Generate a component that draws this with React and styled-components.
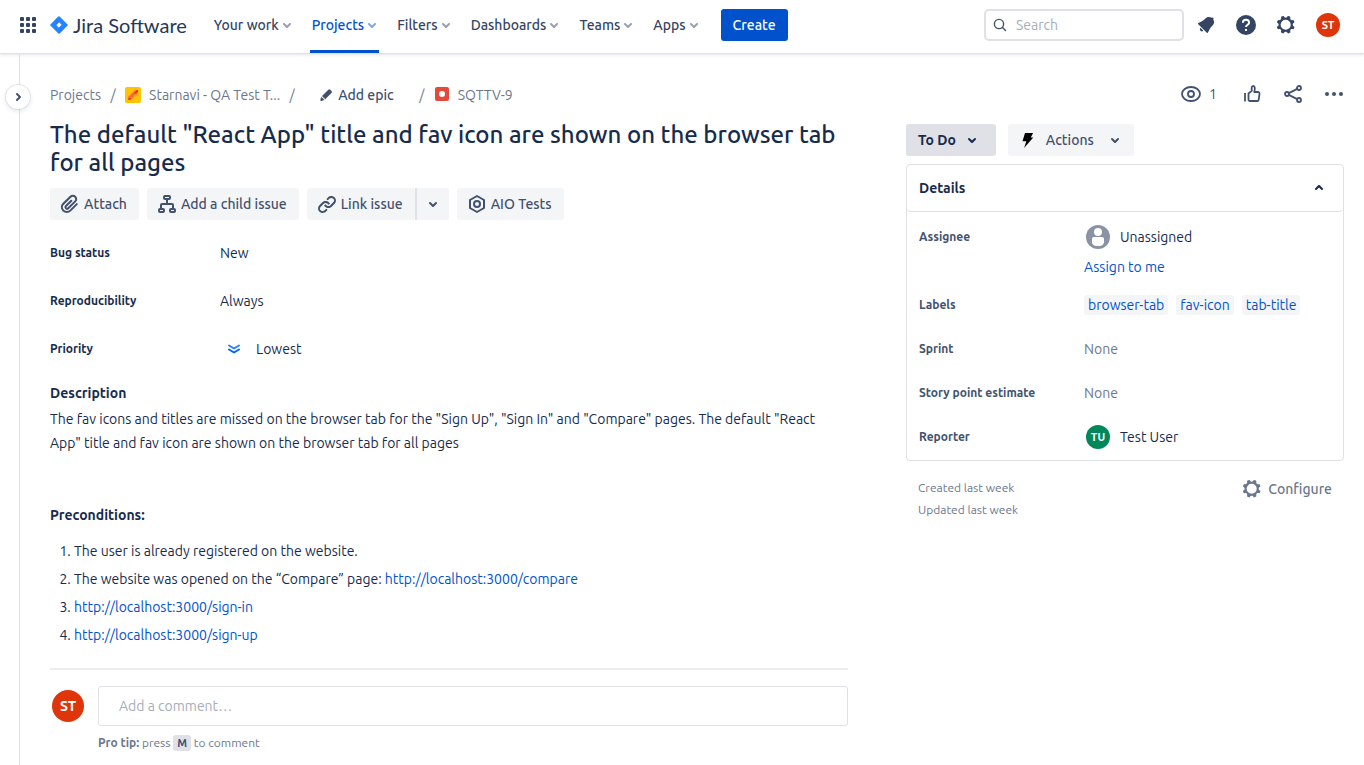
import React from "react";
import styled, { createGlobalStyle, css } from "styled-components";

const c = {
  text: "#172B4D",
  slate: "#42526E",
  nav: "#344563",
  subtle: "#6B778C",
  link: "#0052CC",
  line: "#DFE1E6",
  soft: "#F4F5F7",
  red: "#DE350B",
  green: "#00875A",
};

const GlobalStyle = createGlobalStyle`
  *, *::before, *::after { box-sizing: border-box; }
  body {
    margin: 0;
    background: #fff;
    color: ${c.text};
    font-family: Ubuntu, "Noto Sans", "Open Sans", sans-serif;
    font-size: 14px;
    line-height: 20px;
  }
  button, input { font: inherit; }
  button { line-height: 21px; }
  h1, h2, h3, p, ol, dl, dd, dt { margin: 0; padding: 0; }
  a { color: ${c.link}; text-decoration: none; }
`;

/* ---------- icons ---------- */

const Svg = styled.svg`
  display: block;
  flex: none;
  width: ${(p) => p.$size || 24}px;
  height: ${(p) => p.$size || 24}px;
`;

const Icon = ({ d, size, children }) => (
  <Svg viewBox="0 0 24 24" $size={size} fill="currentColor" aria-hidden="true">
    {d ? <path fillRule="evenodd" d={d} /> : children}
  </Svg>
);

const paths = {
  down: "M8.292 10.293a1.009 1.009 0 000 1.419l2.939 2.965c.218.215.5.322.779.322s.556-.107.769-.322l2.93-2.955a1.01 1.01 0 000-1.419.987.987 0 00-1.406 0l-2.298 2.317-2.307-2.327a.99.99 0 00-1.406 0z",
  up: "M8.292 13.707a1.009 1.009 0 010-1.419l2.939-2.965c.218-.215.5-.322.779-.322s.556.107.769.322l2.93 2.955a1.01 1.01 0 010 1.419.987.987 0 01-1.406 0l-2.298-2.317-2.307 2.327a.99.99 0 01-1.406 0z",
  right: "M10.294 9.698a.988.988 0 010-1.407 1.01 1.01 0 011.419 0l2.965 2.94a1.09 1.09 0 010 1.548l-2.955 2.93a1.01 1.01 0 01-1.42 0 .988.988 0 010-1.407l2.318-2.297-2.327-2.307z",
  gear: "M11.701 16.7a5.002 5.002 0 110-10.003 5.002 5.002 0 010 10.004m8.368-3.117a1.995 1.995 0 01-1.346-1.885c0-.876.563-1.613 1.345-1.885a.48.48 0 00.315-.574 8.947 8.947 0 00-.836-1.993.477.477 0 00-.598-.195 2.04 2.04 0 01-1.29.08 1.988 1.988 0 01-1.404-1.395 2.04 2.04 0 01.076-1.297.478.478 0 00-.196-.597 8.98 8.98 0 00-1.975-.826.479.479 0 00-.574.314 1.995 1.995 0 01-1.885 1.346 1.994 1.994 0 01-1.884-1.345.482.482 0 00-.575-.315c-.708.2-1.379.485-2.004.842a.47.47 0 00-.198.582A2.002 2.002 0 014.445 7.06a.478.478 0 00-.595.196 8.946 8.946 0 00-.833 1.994.48.48 0 00.308.572 1.995 1.995 0 011.323 1.877c0 .867-.552 1.599-1.324 1.877a.479.479 0 00-.308.57 8.99 8.99 0 00.723 1.79.477.477 0 00.624.194c.595-.273 1.343-.264 2.104.238.117.077.225.185.302.3.527.8.512 1.58.198 2.188a.473.473 0 00.168.628 8.946 8.946 0 002.11.897.474.474 0 00.57-.313 1.995 1.995 0 011.886-1.353c.878 0 1.618.567 1.887 1.353a.475.475 0 00.57.313 8.964 8.964 0 002.084-.883.473.473 0 00.167-.631c-.318-.608-.337-1.393.191-2.195.077-.116.185-.225.302-.302.772-.511 1.527-.513 2.125-.23a.477.477 0 00.628-.19 8.925 8.925 0 00.728-1.793.478.478 0 00-.314-.573",
  bell: "M6.485 17.669a2 2 0 002.829 0l-2.829-2.83a2 2 0 000 2.83zm4.897-12.191l-.725.725c-.782.782-2.21 1.813-3.206 2.311l-3.017 1.509c-.495.248-.584.774-.187 1.171l8.556 8.556c.398.396.922.313 1.171-.188l1.51-3.016c.494-.988 1.526-2.42 2.311-3.206l.725-.726a5.048 5.048 0 00.64-6.356 1.01 1.01 0 10-1.354-1.494c-.023.025-.046.049-.066.075a5.043 5.043 0 00-2.788-.84 5.036 5.036 0 00-3.57 1.478z",
  clip: "M11.643 17.965c-1.53 1.495-4.016 1.496-5.542.004a3.773 3.773 0 01.002-5.412l7.147-6.985a2.316 2.316 0 013.24-.001c.891.872.892 2.277.002 3.147l-6.942 6.784a.643.643 0 01-.894-.002.587.587 0 01.002-.842l5.387-5.265a.968.968 0 00.002-1.39 1.024 1.024 0 00-1.432.002l-5.387 5.264a2.522 2.522 0 000 3.619 2.68 2.68 0 003.741-.001l6.942-6.785a4.232 4.232 0 00-.002-6.083 4.412 4.412 0 00-6.168.002l-7.146 6.985a5.69 5.69 0 00-.005 8.203 5.914 5.914 0 008.397-.004l6.512-6.364a.969.969 0 00.002-1.391 1.025 1.025 0 00-1.433.001z",
  link: "M12.856 5.457l-.937.92a1.002 1.002 0 000 1.437 1.047 1.047 0 001.463 0l.984-.966c.967-.95 2.542-1.135 3.602-.288a2.54 2.54 0 01.203 3.81l-2.903 2.852a2.646 2.646 0 01-3.696 0l-1.11-1.09L9 13.57l1.108 1.089c1.822 1.788 4.802 1.788 6.622 0l2.905-2.852a4.558 4.558 0 00-.357-6.82c-1.893-1.517-4.695-1.226-6.422.47M11.144 19.543l.937-.92a1.002 1.002 0 000-1.437 1.047 1.047 0 00-1.462 0l-.985.966c-.967.95-2.542 1.135-3.602.288a2.54 2.54 0 01-.203-3.81l2.903-2.852a2.646 2.646 0 013.696 0l1.11 1.09L15 11.43l-1.108-1.089c-1.822-1.788-4.802-1.788-6.622 0l-2.905 2.852a4.558 4.558 0 00.357 6.82c1.893 1.517 4.695 1.226 6.422-.47",
  bolt: "M9.6 3.500h9.700l-2.800 5.500h3L8.500 21.500l2.700-8.100H6.600z",
};

const AppSwitcher = () => (
  <Icon>
    {[4, 10, 16].map((y) => [4, 10, 16].map((x) => <rect key={`${x}-${y}`} x={x} y={y} width="4" height="4" rx="1" />))}
  </Icon>
);

const JiraMark = () => (
  <Svg viewBox="0 0 18 18" $size={18} aria-hidden="true">
    <defs>
      <linearGradient id="jiraShade" x1="0" x2="1" y1="0" y2="1">
        <stop offset="0" stopColor="#2684FF" />
        <stop offset="0.45" stopColor="#1D74F0" />
        <stop offset="1" stopColor="#2684FF" />
      </linearGradient>
    </defs>
    <path fill="#2684FF" fillRule="evenodd" d="M8.400.5a.8.8 0 011.200 0l8 8a.7.7 0 010 1l-8 8a.8.8 0 01-1.200 0l-8-8a.7.7 0 010-1zM9 6.300L6.300 9 9 11.700 11.700 9z" />
    <path fill="url(#jiraShade)" opacity="0.700" d="M9 6.300C7.300 4.600 7.300 2.300 8.600.6L4.600 4.600 6.300 9zM9 11.700c1.700 1.700 1.700 4 .4 5.700l4-4L11.700 9z" />
  </Svg>
);

const Help = () => (
  <Icon>
    <circle cx="12" cy="12" r="10" />
    <path d="M8.900 9.700a3.100 3 0 116.200 0c0 2.100-3.100 2-3.100 4.400" fill="none" stroke="#fff" strokeWidth="2" />
    <rect x="11" y="16" width="2" height="2" fill="#fff" />
  </Icon>
);

const Magnifier = () => (
  <Icon>
    <g fill="none" stroke="currentColor" strokeWidth="1.400" strokeLinecap="round">
      <circle cx="11" cy="11" r="4.600" />
      <path d="M14.500 14.500l3 3" />
    </g>
  </Icon>
);

const Eye = () => (
  <Icon>
    <g fill="none" stroke="currentColor" strokeWidth="1.800">
      <ellipse cx="12" cy="12" rx="9" ry="7" />
      <circle cx="12" cy="12" r="3" />
    </g>
  </Icon>
);

const Thumb = () => (
  <Icon>
    <g fill="none" stroke="currentColor" strokeWidth="1.800" strokeLinejoin="round">
      <path d="M5 11v8.500" />
      <path d="M8.500 11.500l3.200-2.600V5.500A1.500 1.500 0 0114.600 5c.6 1.600.2 3.300-.4 5H18a1.500 1.500 0 011.500 1.700l-.8 5.900A1.500 1.500 0 0117.200 19H10a1.500 1.500 0 01-1.500-1.500z" />
    </g>
  </Icon>
);

const Share = () => (
  <Icon>
    <g fill="none" stroke="currentColor" strokeWidth="1.800">
      <circle cx="6" cy="12" r="2" />
      <circle cx="18" cy="6" r="2" />
      <circle cx="18" cy="18" r="2" />
      <path d="M7.800 11.100l8.400-4.200M7.800 12.900l8.400 4.200" />
    </g>
  </Icon>
);

const More = () => (
  <Icon>
    <circle cx="5" cy="12" r="2" />
    <circle cx="12" cy="12" r="2" />
    <circle cx="19" cy="12" r="2" />
  </Icon>
);

const Pencil = () => (
  <Svg viewBox="0 0 16 16" $size={16} fill="currentColor" aria-hidden="true">
    <path d="M10.300 2.800a1.400 1.400 0 012 0l1.200 1.200a1.400 1.400 0 010 2l-6.300 6.300-3.200-3.200zM3.300 9.800l3.200 3.200-3.300 1a.8.8 0 01-.9-.9z" />
  </Svg>
);

const Tree = () => (
  <Icon>
    <g fill="none" stroke="currentColor" strokeWidth="2">
      <rect x="9" y="4" width="6" height="3" rx="1" />
      <path d="M12 7v5M6 16v-3a1 1 0 011-1h10a1 1 0 011 1v3" />
      <rect x="4" y="17" width="5" height="3" rx="1" />
      <rect x="15" y="17" width="5" height="3" rx="1" />
    </g>
  </Icon>
);

const Hexagon = () => (
  <Icon>
    <g fill="none" stroke="currentColor" strokeWidth="2" strokeLinejoin="round">
      <path d="M12 4l7 4v8l-7 4-7-4V8z" />
      <circle cx="12" cy="12" r="3" />
    </g>
  </Icon>
);

const Lowest = () => (
  <Svg viewBox="0 0 16 16" $size={16} fill="none" strokeWidth="2" strokeLinecap="round" strokeLinejoin="round" aria-hidden="true">
    <path stroke="#2684FF" d="M3 4.500l5 3 5-3" />
    <path stroke="#0065FF" d="M3 8.500l5 3 5-3" />
  </Svg>
);

const ProjectBadge = () => (
  <Svg viewBox="0 0 16 16" $size={16} aria-hidden="true">
    <rect width="16" height="16" rx="2" fill="#FFC400" />
    <path d="M5 11l6-6" stroke="#FF7452" strokeWidth="4.500" strokeLinecap="round" />
    <path d="M4 12.200l8.300-8.300" stroke="#DE350B" strokeWidth="1.600" strokeLinecap="round" />
    <path d="M5.200 10.500l1.500.3.200-2 1.800.2.200-2 1.800.1" stroke="#FFAB00" strokeWidth="0.800" fill="none" />
  </Svg>
);

const BugBadge = () => (
  <Svg viewBox="0 0 16 16" $size={16} aria-hidden="true">
    <rect x="1" y="0" width="14" height="14" rx="2" fill="#E5493A" />
    <circle cx="8" cy="7" r="3" fill="#fff" />
  </Svg>
);

const Person = () => (
  <Svg viewBox="0 0 24 24" $size={24} aria-hidden="true">
    <circle cx="12" cy="12" r="12" fill="#8993A4" />
    <circle cx="12" cy="7" r="4" fill="#fff" />
    <path d="M6 14a2 2 0 012-2h8a2 2 0 012 2v3.500a5 4 0 01-4 3.500h-4a5 4 0 01-4-3.500z" fill="#fff" />
  </Svg>
);

/* ---------- top bar ---------- */

const TopBar = styled.header`
  display: flex;
  align-items: center;
  height: 54px;
  padding: 0 18px 3px 16px;
  border-bottom: 1px solid ${c.line};
  box-shadow: 0 1px 3px rgba(9, 30, 66, 0.12);
`;

const IconButton = styled.button`
  display: flex;
  align-items: center;
  justify-content: center;
  gap: 6px;
  min-width: ${(p) => p.$w || 32}px;
  height: 32px;
  padding: 0;
  border: 0;
  border-radius: 3px;
  background: none;
  color: ${(p) => p.$color || c.slate};
  cursor: pointer;
`;

const Brand = styled.a`
  display: flex;
  align-items: center;
  gap: 5px;
  margin: 0 25px 0 10px;
  color: #253858;
  font-family: Lato, sans-serif;
  font-size: 20px;
  white-space: nowrap;
`;

const Menu = styled.nav`
  display: flex;
  align-self: stretch;
  gap: 16px;
  margin-bottom: -3px;
`;

const MenuButton = styled.button`
  display: flex;
  align-items: center;
  gap: 3px;
  padding: 0 2px;
  border: 0;
  border-bottom: 3px solid ${(p) => (p.$active ? c.link : "transparent")};
  background: none;
  color: ${(p) => (p.$active ? c.link : c.nav)};
  font-weight: 500;
  white-space: nowrap;
  cursor: pointer;
`;

const Caret = styled.span`
  display: flex;
  justify-content: center;
  width: 10px;
  opacity: 0.5;
`;

const CreateButton = styled.button`
  height: 32px;
  margin-left: 20px;
  padding: 0 12px;
  border: 0;
  border-radius: 3px;
  background: ${c.link};
  color: #fff;
  font-weight: 500;
  cursor: pointer;
`;

const SearchBox = styled.label`
  display: flex;
  align-items: center;
  gap: 4px;
  width: 200px;
  height: 32px;
  margin-left: auto;
  margin-right: 6px;
  padding: 0 4px 0 2px;
  border: 2px solid ${c.line};
  border-radius: 5px;
  color: ${c.slate};
`;

const SearchInput = styled.input`
  flex: 1;
  min-width: 0;
  padding: 0;
  border: 0;
  outline: 0;
  background: none;
  color: ${c.text};
  &::placeholder { color: #A5ADBA; opacity: 1; }
`;

const Tools = styled.div`
  display: flex;
  align-items: center;
  gap: 8px;
`;

const Avatar = styled.span`
  display: flex;
  align-items: center;
  justify-content: center;
  flex: none;
  width: ${(p) => p.$size}px;
  height: ${(p) => p.$size}px;
  border-radius: 50%;
  background: ${(p) => p.$bg};
  color: #fff;
  font-size: ${(p) => (p.$size > 24 ? 14 : 11)}px;
  font-weight: 600;
`;

/* ---------- page frame ---------- */

const Frame = styled.div`
  display: flex;
  flex-direction: column;
  min-height: 100vh;
`;

const Body = styled.div`
  display: flex;
  flex: 1;
`;

const Rail = styled.aside`
  position: relative;
  flex: none;
  width: 20px;
  border-right: 1px solid ${c.line};
`;

const RailToggle = styled.button`
  position: absolute;
  top: 31px;
  left: 6px;
  display: flex;
  align-items: center;
  justify-content: center;
  width: 24px;
  height: 24px;
  padding: 0;
  border: 0;
  border-radius: 50%;
  background: #fff;
  box-shadow: 0 0 0 1px rgba(9, 30, 66, 0.08), 0 2px 4px 1px rgba(9, 30, 66, 0.08);
  color: ${c.slate};
`;

const Page = styled.main`
  display: grid;
  grid-template-columns: minmax(0, 798fr) minmax(0, 438fr);
  column-gap: 58px;
  flex: 1;
  align-items: start;
  padding: 25px 20px 12px 30px;
`;

const Column = styled.div`
  min-width: 0;
`;

/* ---------- left column ---------- */

const Crumbs = styled.nav`
  display: flex;
  align-items: center;
  gap: 8px;
  height: 32px;
  white-space: nowrap;
  color: ${c.subtle};
`;

const Crumb = styled.a`
  display: flex;
  align-items: center;
  gap: 8px;
  color: ${c.subtle};
`;

const Slash = styled.span`
  width: 8px;
  text-align: center;
`;

const EpicButton = styled.button`
  display: flex;
  align-items: center;
  gap: 4px;
  margin: 0 16px 0 14px;
  padding: 0;
  border: 0;
  background: none;
  color: ${c.slate};
  font-weight: 500;
`;

const Title = styled.h1`
  margin: 10px 0 11px;
  font-size: 24px;
  font-weight: 500;
  line-height: 28px;
`;

const Toolbar = styled.div`
  display: flex;
  gap: 8px;
`;

const softButton = css`
  display: flex;
  align-items: center;
  height: 32px;
  border: 0;
  border-radius: 3px;
  background: ${c.soft};
  color: ${c.slate};
  font-weight: 500;
  white-space: nowrap;
  cursor: pointer;
`;

const ToolButton = styled.button`
  ${softButton}
  gap: 2px;
  padding: 0 12px 0 8px;
`;

const Split = styled.div`
  display: flex;
  border-radius: 3px;
  overflow: hidden;
`;

const SplitMore = styled.button`
  ${softButton}
  justify-content: center;
  width: 34px;
  padding: 0;
  border-left: 2px solid ${c.line};
  border-radius: 0;
`;

const Fields = styled.dl`
  display: grid;
  grid-template-columns: 170px 1fr;
  grid-auto-rows: 48px;
  align-items: center;
  margin-top: 9px;
`;

const FieldName = styled.dt`
  color: ${(p) => p.$color || c.text};
  font-size: 12px;
  font-weight: 700;
`;

const FieldValue = styled.dd`
  display: flex;
  align-items: center;
  gap: ${(p) => p.$gap || 8}px;
  padding-left: ${(p) => p.$inset || 0}px;
  color: ${(p) => (p.$muted ? c.subtle : c.text)};
`;

const SectionTitle = styled.h3`
  font-size: 14px;
  font-weight: 700;
  line-height: 24px;
  margin-top: ${(p) => p.$top || 0}px;
`;

const Paragraph = styled.p`
  line-height: 24px;
  margin-top: 2px;
`;

const Steps = styled.ol`
  margin-top: 12px;
  padding-left: 24px;
  line-height: 24px;
  li + li { margin-top: 4px; }
`;

const CommentArea = styled.section`
  display: grid;
  grid-template-columns: 32px minmax(0, 1fr);
  column-gap: 14px;
  align-items: center;
  margin-top: 21px;
  padding: 16px 0 0 2px;
  border-top: 2px solid #EBECF0;
`;

const CommentInput = styled.input`
  width: 100%;
  height: 40px;
  padding: 0 20px;
  border: 1px solid ${c.line};
  border-radius: 3px;
  color: ${c.text};
  &::placeholder { color: #A5ADBA; opacity: 1; }
`;

const Tip = styled.p`
  grid-column: 2;
  margin-top: 8px;
  color: ${c.subtle};
  font-size: 12px;
  line-height: 18px;
`;

const Key = styled.kbd`
  display: inline-block;
  padding: 0 4px;
  border-radius: 3px;
  background: ${c.line};
  color: ${c.slate};
  font-family: inherit;
  font-size: 11px;
  font-weight: 700;
  line-height: 16px;
`;

/* ---------- right column ---------- */

const IssueTools = styled.div`
  display: flex;
  align-items: center;
  justify-content: flex-end;
  gap: 9px;
  height: 30px;
  margin-right: -6px;
`;

const StatusRow = styled.div`
  display: flex;
  gap: 12px;
  margin: 15px 0 8px;
`;

const StatusButton = styled.button`
  ${softButton}
  gap: 4px;
  padding: 0 12px;
  background: ${c.line};
  color: ${c.text};
  font-weight: 700;
`;

const ActionsButton = styled.button`
  ${softButton}
  gap: 9px;
  padding: 0 7px 0 9px;
`;

const Panel = styled.section`
  border: 1px solid ${c.line};
  border-radius: 4px;
`;

const PanelHeader = styled.h2`
  border-bottom: 1px solid ${c.line};
  border-radius: 4px;
  font-size: 14px;
`;

const PanelToggle = styled.button`
  display: flex;
  align-items: center;
  justify-content: space-between;
  width: 100%;
  height: 46px;
  padding: 0 12px;
  border: 0;
  background: none;
  color: ${c.text};
  font-weight: 700;
`;

const Details = styled.dl`
  display: grid;
  grid-template-columns: 165px minmax(0, 1fr);
  padding: 3px 12px 1px;
  line-height: 44px;
`;

const AssigneeValue = styled.dd`
  padding-bottom: 8px;
`;

const AssignLink = styled.a`
  display: block;
  line-height: 16px;
`;

const Labels = styled.dd`
  display: flex;
  align-items: center;
  gap: 8px;
`;

const Tag = styled.a`
  padding: 0 4px;
  border-radius: 3px;
  background: ${c.soft};
  line-height: 20px;
  white-space: nowrap;
`;

const PanelFooter = styled.footer`
  display: flex;
  align-items: flex-start;
  justify-content: space-between;
  padding: 16px 12px 0;
  color: ${c.subtle};
  font-size: 12px;
  line-height: 22px;
`;

const ConfigureButton = styled.button`
  display: flex;
  align-items: center;
  gap: 4px;
  height: 24px;
  padding: 0;
  border: 0;
  background: none;
  color: ${c.subtle};
  font-size: 14px;
  font-weight: 500;
`;

const menuItems = ["Your work", "Projects", "Filters", "Dashboards", "Teams", "Apps"];

export default function App() {
  return (
    <Frame>
      <GlobalStyle />
      <TopBar>
        <IconButton $w={24} $color={c.nav} aria-label="Switch to"><AppSwitcher /></IconButton>
        <Brand href="#home"><JiraMark />Jira Software</Brand>
        <Menu aria-label="Main">
          {menuItems.map((name) => (
            <MenuButton key={name} $active={name === "Projects"}>
              {name}
              <Caret><Icon d={paths.down} /></Caret>
            </MenuButton>
          ))}
        </Menu>
        <CreateButton>Create</CreateButton>
        <SearchBox>
          <Magnifier />
          <SearchInput type="search" placeholder="Search" aria-label="Search" />
        </SearchBox>
        <Tools>
          <IconButton $color={c.nav} aria-label="Notifications"><Icon d={paths.bell} /></IconButton>
          <IconButton $color={c.nav} aria-label="Help"><Help /></IconButton>
          <IconButton $color={c.nav} aria-label="Settings"><Icon d={paths.gear} /></IconButton>
          <IconButton $w={36} aria-label="Your profile"><Avatar $size={24} $bg={c.red}>ST</Avatar></IconButton>
        </Tools>
      </TopBar>

      <Body>
        <Rail>
          <RailToggle aria-label="Expand sidebar"><Icon d={paths.right} /></RailToggle>
        </Rail>
        <Page>
          <Column>
            <Crumbs aria-label="Breadcrumbs">
              <Crumb href="#projects">Projects</Crumb>
              <Slash>/</Slash>
              <Crumb href="#project"><ProjectBadge />Starnavi - QA Test T...</Crumb>
              <Slash>/</Slash>
              <EpicButton><Pencil />Add epic</EpicButton>
              <Slash>/</Slash>
              <Crumb href="#issue"><BugBadge />SQTTV-9</Crumb>
            </Crumbs>
            <Title>The default "React App" title and fav icon are shown on the browser tab for all pages</Title>
            <Toolbar>
              <ToolButton><Icon d={paths.clip} />Attach</ToolButton>
              <ToolButton><Tree />Add a child issue</ToolButton>
              <Split>
                <ToolButton><Icon d={paths.link} />Link issue</ToolButton>
                <SplitMore aria-label="More link options"><Icon d={paths.down} /></SplitMore>
              </Split>
              <ToolButton><Hexagon />AIO Tests</ToolButton>
            </Toolbar>

            <Fields>
              <FieldName>Bug status</FieldName>
              <FieldValue>New</FieldValue>
              <FieldName>Reproducibility</FieldName>
              <FieldValue>Always</FieldValue>
              <FieldName>Priority</FieldName>
              <FieldValue $inset={6} $gap={14}><Lowest />Lowest</FieldValue>
            </Fields>

            <SectionTitle $top={8}>Description</SectionTitle>
            <Paragraph>
              The fav icons and titles are missed on the browser tab for the "Sign Up", "Sign In" and "Compare" pages.
              The default "React App" title and fav icon are shown on the browser tab for all pages
            </Paragraph>
            <SectionTitle $top={48}>Preconditions:</SectionTitle>
            <Steps>
              <li>The user is already registered on the website.</li>
              <li>The website was opened on the “Compare” page: <a href="http://localhost:3000/compare">http://localhost:3000/compare</a></li>
              <li><a href="http://localhost:3000/sign-in">http://localhost:3000/sign-in</a></li>
              <li><a href="http://localhost:3000/sign-up">http://localhost:3000/sign-up</a></li>
            </Steps>

            <CommentArea>
              <Avatar $size={32} $bg={c.red}>ST</Avatar>
              <CommentInput placeholder="Add a comment…" aria-label="Add a comment" />
              <Tip><b>Pro tip:</b> press <Key>M</Key> to comment</Tip>
            </CommentArea>
          </Column>

          <Column>
            <IssueTools>
              <IconButton $w={58} aria-label="Watchers"><Eye />1</IconButton>
              <IconButton aria-label="Vote"><Thumb /></IconButton>
              <IconButton aria-label="Share"><Share /></IconButton>
              <IconButton aria-label="More actions"><More /></IconButton>
            </IssueTools>
            <StatusRow>
              <StatusButton>To Do<Icon d={paths.down} /></StatusButton>
              <ActionsButton><Icon size={20}><path d={paths.bolt} fill="#000" /></Icon>Actions<Icon d={paths.down} /></ActionsButton>
            </StatusRow>
            <Panel>
              <PanelHeader>
                <PanelToggle aria-expanded="true">Details<Icon d={paths.up} /></PanelToggle>
              </PanelHeader>
              <Details>
                <FieldName $color={c.slate}>Assignee</FieldName>
                <AssigneeValue>
                  <FieldValue as="div" $inset={2} $gap={10}><Person />Unassigned</FieldValue>
                  <AssignLink href="#assign">Assign to me</AssignLink>
                </AssigneeValue>
                <FieldName $color={c.slate}>Labels</FieldName>
                <Labels>
                  <Tag href="#browser-tab">browser-tab</Tag>
                  <Tag href="#fav-icon">fav-icon</Tag>
                  <Tag href="#tab-title">tab-title</Tag>
                </Labels>
                <FieldName $color={c.slate}>Sprint</FieldName>
                <FieldValue $muted>None</FieldValue>
                <FieldName $color={c.slate}>Story point estimate</FieldName>
                <FieldValue $muted>None</FieldValue>
                <FieldName $color={c.slate}>Reporter</FieldName>
                <FieldValue $inset={2} $gap={10}><Avatar $size={24} $bg={c.green}>TU</Avatar>Test User</FieldValue>
              </Details>
            </Panel>
            <PanelFooter>
              <div>
                <div>Created last week</div>
                <div>Updated last week</div>
              </div>
              <ConfigureButton><Icon d={paths.gear} />Configure</ConfigureButton>
            </PanelFooter>
          </Column>
        </Page>
      </Body>
    </Frame>
  );
}
